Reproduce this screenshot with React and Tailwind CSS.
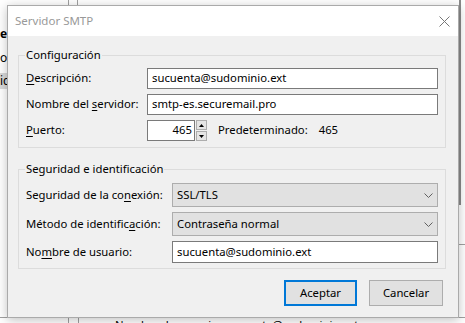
import React from "react";

const font = { fontFamily: "'Segoe UI', 'Noto Sans', sans-serif" };

const Key = ({ children }) => <span className="underline underline-offset-2">{children}</span>;

const Row = ({ label, children, labelW = "w-[121px]" }) => (
  <div className="flex items-center">
    <div className={`${labelW} shrink-0 text-[11.3px] text-black whitespace-nowrap`}>{label}</div>
    <div className="flex-1">{children}</div>
  </div>
);

const TextBox = ({ value, h = "h-[21px]" }) => (
  <div className={`${h} border border-[#7a7a7a] bg-white flex items-center pl-[4px] text-[11.3px] text-black`}>
    {value}
  </div>
);

const Chevron = () => (
  <svg width="9" height="5" viewBox="0 0 9 5" className="shrink-0">
    <path d="M0.5 0.5 L4.5 4.5 L8.5 0.5" fill="none" stroke="#606060" strokeWidth="1" />
  </svg>
);

const Combo = ({ value }) => (
  <div className="h-[24px] border border-[#adadad] bg-[#e1e1e1] flex items-center justify-between pl-[4px] pr-[4px] text-[11.3px] text-black">
    <span>{value}</span>
    <Chevron />
  </div>
);

const Group = ({ title, children, className = "" }) => (
  <fieldset className={`border border-[#dcdcdc] mx-0 px-[7px] ${className}`}>
    <legend className="ml-[-1px] px-[1px] text-[11.3px] text-black leading-[16px]">{title}</legend>
    {children}
  </fieldset>
);

export default function App() {
  return (
    <div className="relative w-[465px] h-[323px] bg-white overflow-hidden" style={font}>
      {/* window behind the dialog */}
      <div className="absolute left-[68px] top-0 w-[10px] h-[8px] border-x border-[#a0a0a0]" />
      <div className="absolute left-[459px] top-0 w-[2px] h-[205px] bg-[#8a8a8a]" />
      <div className="absolute left-[458px] top-[244px] w-[7px] h-[1px] bg-[#a0a0a0]" />
      <div className="absolute left-0 top-[28px] text-[12px] font-bold text-black leading-none">es</div>
      <div className="absolute left-0 top-[52px] text-[12px] text-black leading-none">o</div>
      <div className="absolute left-0 top-[73px] w-[8px] h-[16px] bg-[#d9d9d9] text-[12px] text-black leading-[16px]">ic</div>
      <div className="absolute left-0 top-[317px] w-[465px] h-[1px] bg-[#a0a0a0]" />
      <div className="absolute left-[68px] top-[317px] w-[11px] h-[6px] border-x border-[#a0a0a0]" />
      <div className="absolute left-[115px] top-[318px] text-[11.3px] text-black leading-[14px] whitespace-nowrap">
        Nombre de usuario: sucuenta@sudominio.ext
      </div>

      {/* dialog */}
      <div className="absolute left-[7px] top-[5px] w-[452px] h-[313px] border border-[#aaaaaa] bg-[#f0f0f0] flex flex-col shadow-[0_2px_10px_rgba(0,0,0,0.25)]">
        <div className="h-[30px] bg-white flex items-center justify-between pl-[7px] pr-[8px]">
          <span className="text-[11.5px] text-[#999999]">Servidor SMTP</span>
          <svg width="11" height="11" viewBox="0 0 11 11">
            <path d="M0.5 0.5 L10.5 10.5 M10.5 0.5 L0.5 10.5" stroke="#777" strokeWidth="1" />
          </svg>
        </div>

        <div className="pl-[10px] pr-[12px] pt-[11px] flex flex-col">
          <Group title="Configuración" className="pt-[5px] pb-[6px]">
            <div className="flex flex-col gap-[5px]">
              <Row label={<><Key>D</Key>escripción:</>}>
                <TextBox value="sucuenta@sudominio.ext" />
              </Row>
              <Row label={<>Nombre del <Key>s</Key>ervidor:</>}>
                <TextBox value="smtp-es.securemail.pro" />
              </Row>
              <Row label={<><Key>P</Key>uerto:</>}>
                <div className="flex items-center">
                  <div className="w-[48px] h-[21px] border border-[#7a7a7a] bg-white flex items-center justify-end pr-[2px] text-[11.3px] text-black">
                    465
                  </div>
                  <div className="flex flex-col ml-[1px] w-[11px] h-[21px] gap-[1px]">
                    <div className="flex-1 border border-[#adadad] bg-[#e5e5e5] flex items-center justify-center">
                      <svg width="5" height="3" viewBox="0 0 5 3"><path d="M0 3 L2.5 0 L5 3 Z" fill="#000" /></svg>
                    </div>
                    <div className="flex-1 border border-[#adadad] bg-[#e5e5e5] flex items-center justify-center">
                      <svg width="5" height="3" viewBox="0 0 5 3"><path d="M0 0 L2.5 3 L5 0 Z" fill="#000" /></svg>
                    </div>
                  </div>
                  <span className="ml-[11px] text-[11.3px] text-black">Predeterminado:</span>
                  <span className="ml-[11px] text-[11.3px] text-black">465</span>
                </div>
              </Row>
            </div>
          </Group>

          <Group title="Seguridad e identificación" className="mt-[13px] pt-[6px] pb-[5px]">
            <div className="flex flex-col gap-[5px]">
              <Row labelW="w-[146px]" label={<>Seguridad de la co<Key>n</Key>exión:</>}>
                <Combo value="SSL/TLS" />
              </Row>
              <Row labelW="w-[146px]" label={<>Método de identific<Key>a</Key>ción:</>}>
                <Combo value="Contraseña normal" />
              </Row>
              <Row labelW="w-[146px]" label={<>No<Key>m</Key>bre de usuario:</>}>
                <TextBox value="sucuenta@sudominio.ext" h="h-[22px]" />
              </Row>
            </div>
          </Group>

          <div className="flex justify-end gap-[12px] mt-[11px] pr-[3px]">
            <button className="w-[73px] h-[26px] border-2 border-[#0078d7] bg-[#e1e1e1] text-[11.3px] text-black">
              Aceptar
            </button>
            <button className="w-[74px] h-[26px] border border-[#adadad] bg-[#e1e1e1] text-[11.3px] text-black">
              Cancelar
            </button>
          </div>
        </div>
      </div>
    </div>
  );
}
